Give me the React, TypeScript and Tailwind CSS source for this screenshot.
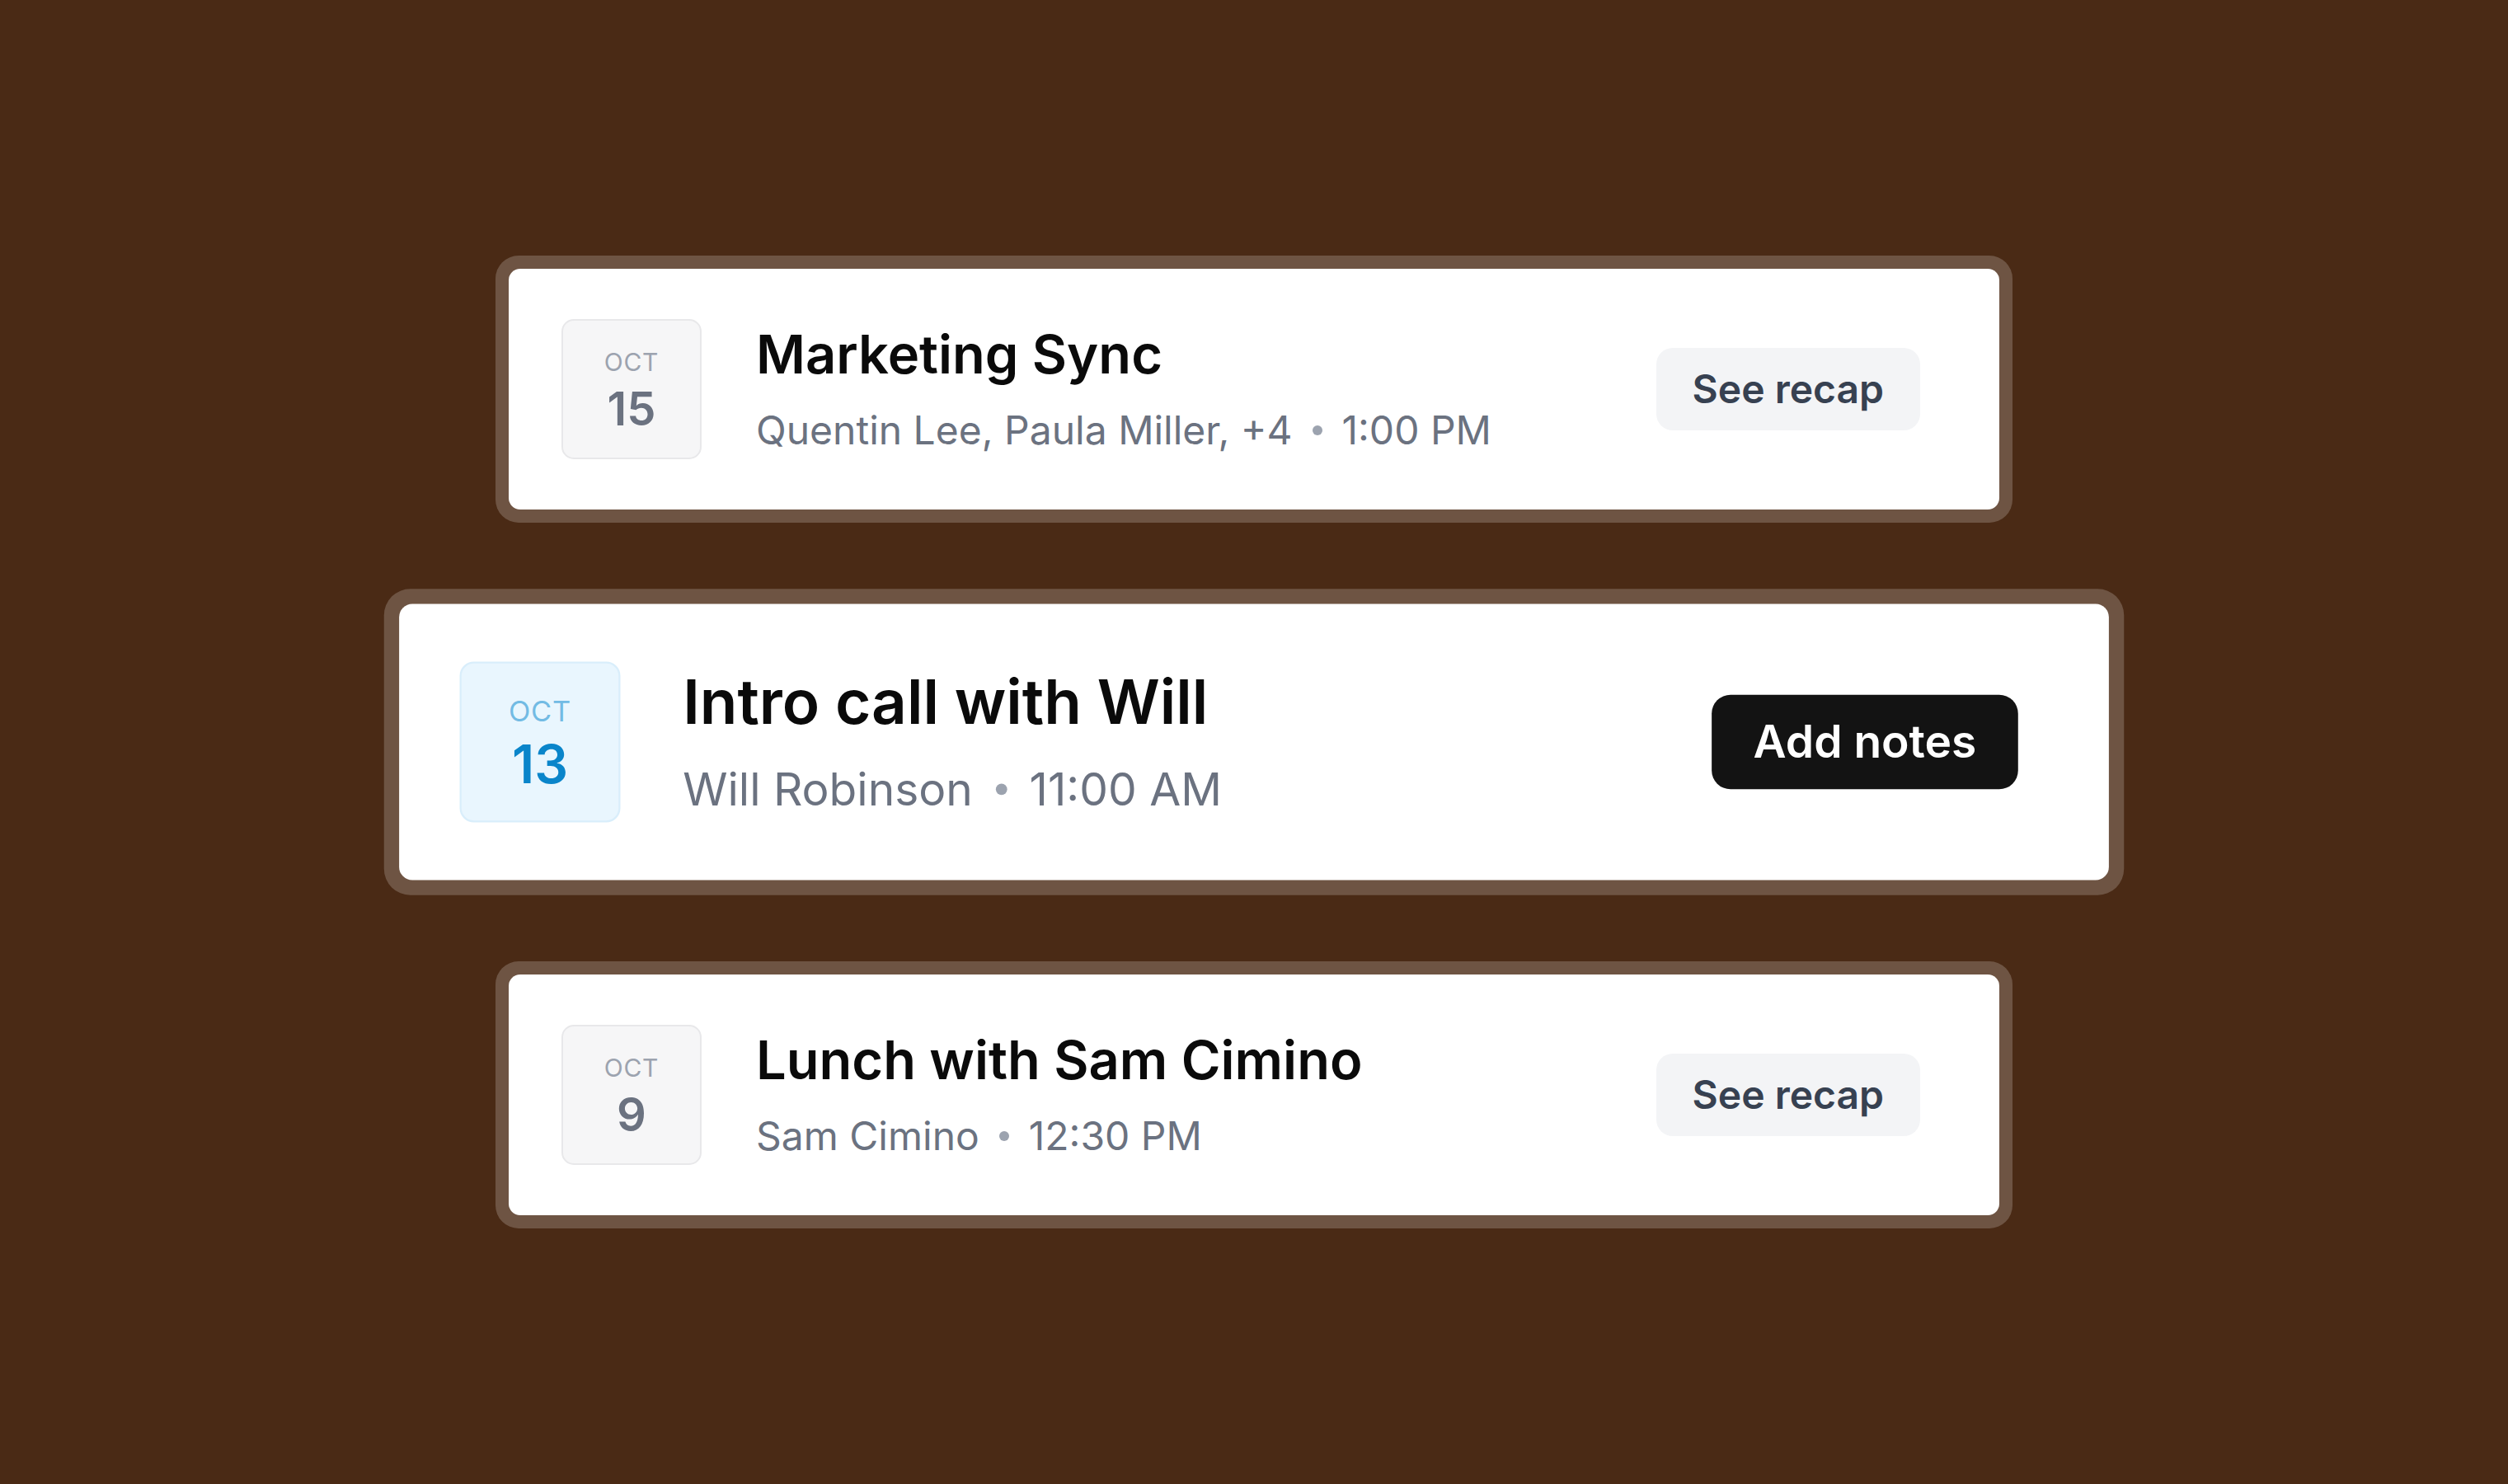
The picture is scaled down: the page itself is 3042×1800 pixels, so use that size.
import type { ReactNode } from 'react';

interface Meeting {
  day: string;
  title: string;
  people: string;
  time: string;
  action: string;
  active?: boolean;
}

const meetings: Meeting[] = [
  { day: '15', title: 'Marketing Sync', people: 'Quentin Lee, Paula Miller, +4', time: '1:00 PM', action: 'See recap' },
  { day: '13', title: 'Intro call with Will', people: 'Will Robinson', time: '11:00 AM', action: 'Add notes', active: true },
  { day: '9', title: 'Lunch with Sam Cimino', people: 'Sam Cimino', time: '12:30 PM', action: 'See recap' },
];

function DateBadge({ day, active }: { day: string; active?: boolean }) {
  return (
    <div
      className={`w-[170px] h-[170px] shrink-0 rounded-[15px] border-2 flex flex-col items-center justify-center pt-[2px] ${
        active ? 'bg-[#e9f6fe] border-[#d9eefb]' : 'bg-[#f6f6f7] border-[#e8e8ea]'
      }`}
    >
      <span
        className={`text-[30px] leading-[34px] tracking-wide ${active ? 'text-[#72bbe4]' : 'text-[#9ca3af]'}`}
      >
        OCT
      </span>
      <span
        className={`mt-[12px] text-[56px] leading-[56px] font-semibold ${active ? 'text-[#0a85ca]' : 'text-[#6b7280]'}`}
      >
        {day}
      </span>
    </div>
  );
}

function Card({ meeting, children }: { meeting: Meeting; children?: ReactNode }) {
  return (
    <div
      className={`w-[1840px] rounded-[28px] bg-white/20 p-[16px] ${meeting.active ? 'scale-[1.147]' : ''}`}
    >
      <div className="bg-white rounded-[14px] pl-[64px] pr-[96px] py-[61px] flex items-center">
        <DateBadge day={meeting.day} active={meeting.active} />

        {/* Title + attendees */}
        <div className="ml-[66px] flex-1 flex flex-col">
          <span className="text-[65px] leading-[80px] font-semibold text-[#0a0a0a]">
            {meeting.title}
          </span>
          <div className="mt-[20px] flex items-center text-[48px] leading-[64px] text-[#6b7280]">
            <span>{meeting.people}</span>
            <span className="mx-[24px] w-[12px] h-[12px] rounded-full bg-[#9ca3af]" />
            <span>{meeting.time}</span>
          </div>
        </div>

        {children}
      </div>
    </div>
  );
}

export default function App() {
  return (
    <div className="w-full h-[1800px] bg-[#4a2a15] flex flex-col items-center justify-center gap-[104px] font-['Inter','Noto_Sans',sans-serif]">
      {meetings.map((m) => (
        <Card key={m.title} meeting={m}>
          <button
            className={`h-[100px] px-[44px] rounded-[20px] text-[48px] font-semibold shrink-0 ${
              m.active ? 'bg-[#131313] text-white' : 'bg-[#f3f4f6] text-[#374151]'
            }`}
          >
            {m.action}
          </button>
        </Card>
      ))}
    </div>
  );
}
